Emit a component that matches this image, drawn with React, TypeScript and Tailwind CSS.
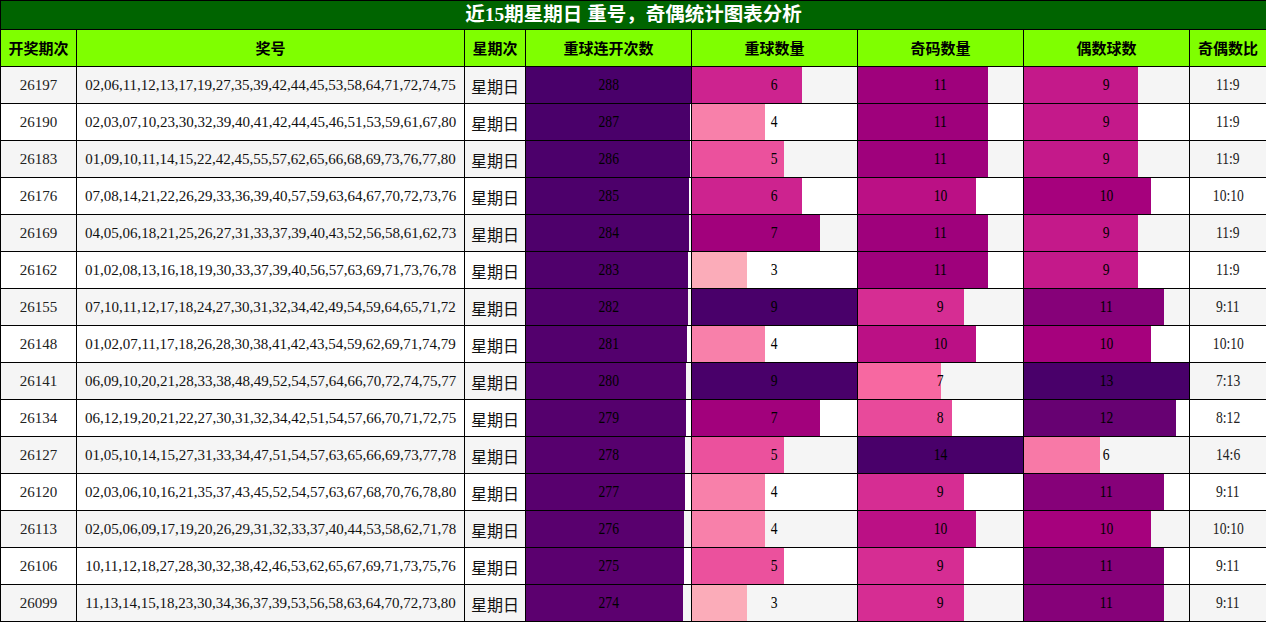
const rows = [
  { issue: "26197", nums: "02,06,11,12,13,17,19,27,35,39,42,44,45,53,58,64,71,72,74,75", streak: 288, repeat: 6, odd: 11, even: 9 },
  { issue: "26190", nums: "02,03,07,10,23,30,32,39,40,41,42,44,45,46,51,53,59,61,67,80", streak: 287, repeat: 4, odd: 11, even: 9 },
  { issue: "26183", nums: "01,09,10,11,14,15,22,42,45,55,57,62,65,66,68,69,73,76,77,80", streak: 286, repeat: 5, odd: 11, even: 9 },
  { issue: "26176", nums: "07,08,14,21,22,26,29,33,36,39,40,57,59,63,64,67,70,72,73,76", streak: 285, repeat: 6, odd: 10, even: 10 },
  { issue: "26169", nums: "04,05,06,18,21,25,26,27,31,33,37,39,40,43,52,56,58,61,62,73", streak: 284, repeat: 7, odd: 11, even: 9 },
  { issue: "26162", nums: "01,02,08,13,16,18,19,30,33,37,39,40,56,57,63,69,71,73,76,78", streak: 283, repeat: 3, odd: 11, even: 9 },
  { issue: "26155", nums: "07,10,11,12,17,18,24,27,30,31,32,34,42,49,54,59,64,65,71,72", streak: 282, repeat: 9, odd: 9, even: 11 },
  { issue: "26148", nums: "01,02,07,11,17,18,26,28,30,38,41,42,43,54,59,62,69,71,74,79", streak: 281, repeat: 4, odd: 10, even: 10 },
  { issue: "26141", nums: "06,09,10,20,21,28,33,38,48,49,52,54,57,64,66,70,72,74,75,77", streak: 280, repeat: 9, odd: 7, even: 13 },
  { issue: "26134", nums: "06,12,19,20,21,22,27,30,31,32,34,42,51,54,57,66,70,71,72,75", streak: 279, repeat: 7, odd: 8, even: 12 },
  { issue: "26127", nums: "01,05,10,14,15,27,31,33,34,47,51,54,57,63,65,66,69,73,77,78", streak: 278, repeat: 5, odd: 14, even: 6 },
  { issue: "26120", nums: "02,03,06,10,16,21,35,37,43,45,52,54,57,63,67,68,70,76,78,80", streak: 277, repeat: 4, odd: 9, even: 11 },
  { issue: "26113", nums: "02,05,06,09,17,19,20,26,29,31,32,33,37,40,44,53,58,62,71,78", streak: 276, repeat: 4, odd: 10, even: 10 },
  { issue: "26106", nums: "10,11,12,18,27,28,30,32,38,42,46,53,62,65,67,69,71,73,75,76", streak: 275, repeat: 5, odd: 9, even: 11 },
  { issue: "26099", nums: "11,13,14,15,18,23,30,34,36,37,39,53,56,58,63,64,70,72,73,80", streak: 274, repeat: 3, odd: 9, even: 11 },
];

// RdPu ramp, light -> dark
const ramp = ["#fff7f3", "#fde0dd", "#fcc5c0", "#fa9fb5", "#f768a1", "#dd3497", "#ae017e", "#7a0177", "#49006a"];

function rdpu(t: number) {
  const p = Math.max(0, Math.min(1, t)) * (ramp.length - 1);
  const i = Math.min(Math.floor(p), ramp.length - 2);
  const f = p - i;
  const a = ramp[i];
  const b = ramp[i + 1];
  const ch = (s: string, k: number) => parseInt(s.slice(1 + k * 2, 3 + k * 2), 16);
  const mix = [0, 1, 2].map((k) => Math.round(ch(a, k) + (ch(b, k) - ch(a, k)) * f));
  return `rgb(${mix[0]},${mix[1]},${mix[2]})`;
}

const headers = ["开奖期次", "奖号", "星期次", "重球连开次数", "重球数量", "奇码数量", "偶数球数", "奇偶数比"];

function BarCell({ value, max }: { value: number; max: number }) {
  const t = value / max;
  return (
    <td className="border border-black p-0">
      <div className="relative h-[36px]">
        <div className="h-full" style={{ width: `${t * 100}%`, background: rdpu(t) }} />
        <div className="absolute inset-0 flex items-center justify-center">
          <span className="inline-block scale-x-[0.8] text-[17px] text-black">{value}</span>
        </div>
      </div>
    </td>
  );
}

export default function App() {
  const maxStreak = Math.max(...rows.map((r) => r.streak));
  const maxRepeat = Math.max(...rows.map((r) => r.repeat));
  const maxOdd = Math.max(...rows.map((r) => r.odd));
  const maxEven = Math.max(...rows.map((r) => r.even));

  return (
    <div className="w-[1266px] bg-white font-['Liberation_Serif','Noto_Sans_CJK_SC',serif]">
      <table className="w-[1266px] table-fixed border-collapse">
        <colgroup>
          <col className="w-[76px]" />
          <col className="w-[388px]" />
          <col className="w-[61px]" />
          <col className="w-[166px]" />
          <col className="w-[166px]" />
          <col className="w-[166px]" />
          <col className="w-[166px]" />
          <col className="w-[77px]" />
        </colgroup>
        <thead>
          <tr>
            <th colSpan={8} className="h-[29px] border border-black bg-[#006400] p-0 text-[19.5px] leading-[26px] font-bold text-white">
              近15期星期日 重号，奇偶统计图表分析
            </th>
          </tr>
          <tr>
            {headers.map((h) => (
              <th
                key={h}
                className="h-[37px] border border-black bg-[#7fff00] p-0 font-['Noto_Sans_CJK_SC',sans-serif] text-[15px] font-bold text-black"
              >
                {h}
              </th>
            ))}
          </tr>
        </thead>
        <tbody>
          {rows.map((r, i) => (
            <tr key={r.issue} className={i % 2 === 0 ? "bg-[#f5f5f5]" : "bg-white"}>
              <td className="h-[37px] border border-black p-0 text-center text-[15px] text-[#222]">{r.issue}</td>
              <td className="border border-black p-0 text-center text-[15px] text-[#111]">{r.nums}</td>
              <td className="border border-black p-0 pt-[2px] text-center font-['Noto_Sans_CJK_SC',sans-serif] text-[16px] text-[#111]">
                星期日
              </td>
              <BarCell value={r.streak} max={maxStreak} />
              <BarCell value={r.repeat} max={maxRepeat} />
              <BarCell value={r.odd} max={maxOdd} />
              <BarCell value={r.even} max={maxEven} />
              <td className="border border-black p-0 text-center">
                <span className="inline-block scale-x-[0.8] text-[17px] text-[#222]">
                  {r.odd}:{r.even}
                </span>
              </td>
            </tr>
          ))}
        </tbody>
      </table>
    </div>
  );
}
